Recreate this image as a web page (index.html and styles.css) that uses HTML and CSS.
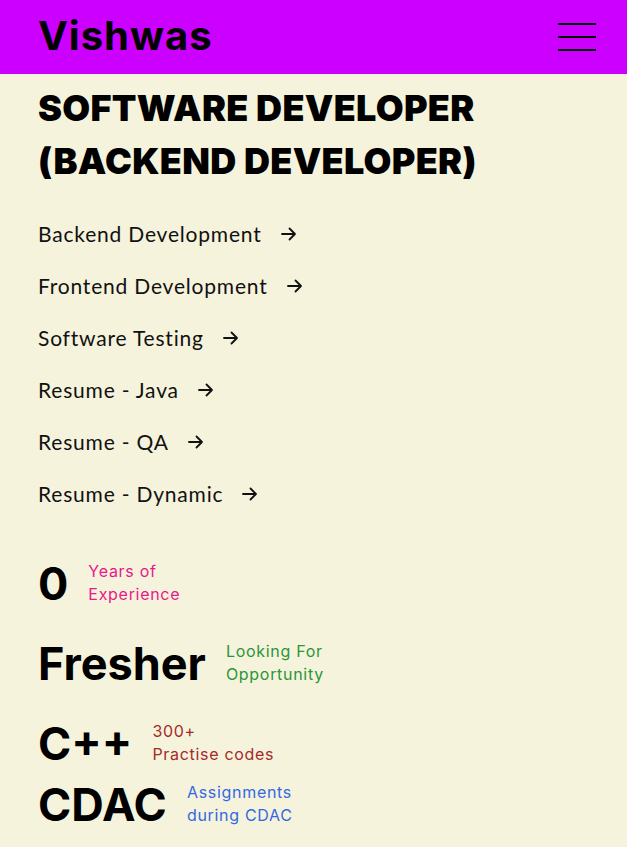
FILE: index.html
```html
<!DOCTYPE html>
<html lang="en">
<head>
<meta charset="utf-8">
<title>Vishwas</title>
<link rel="stylesheet" href="styles.css">
</head>
<body>
<header class="topbar">
  <div class="brand">Vishwas</div>
  <button class="menu" aria-label="Menu"><span></span><span></span><span></span></button>
</header>
<main class="content">
  <h1 class="title">SOFTWARE DEVELOPER (BACKEND DEVELOPER)</h1>
  <ul class="links">
    <li><a href="#">Backend Development<svg class="arrow" viewBox="0 0 16 14"><path d="M1 7h13M8.5 1.5 14 7l-5.5 5.5"/></svg></a></li>
    <li><a href="#">Frontend Development<svg class="arrow" viewBox="0 0 16 14"><path d="M1 7h13M8.5 1.5 14 7l-5.5 5.5"/></svg></a></li>
    <li><a href="#">Software Testing<svg class="arrow" viewBox="0 0 16 14"><path d="M1 7h13M8.5 1.5 14 7l-5.5 5.5"/></svg></a></li>
    <li><a href="#">Resume - Java<svg class="arrow" viewBox="0 0 16 14"><path d="M1 7h13M8.5 1.5 14 7l-5.5 5.5"/></svg></a></li>
    <li><a href="#">Resume - QA<svg class="arrow" viewBox="0 0 16 14"><path d="M1 7h13M8.5 1.5 14 7l-5.5 5.5"/></svg></a></li>
    <li><a href="#">Resume - Dynamic<svg class="arrow" viewBox="0 0 16 14"><path d="M1 7h13M8.5 1.5 14 7l-5.5 5.5"/></svg></a></li>
  </ul>
  <div class="stats">
    <div class="stat"><span class="big">0</span><span class="small pink">Years of<br>Experience</span></div>
    <div class="stat"><span class="big">Fresher</span><span class="small green">Looking For<br>Opportunity</span></div>
    <div class="stat"><span class="big">C++</span><span class="small brown">300+<br>Practise codes</span></div>
    <div class="stat tight"><span class="big">CDAC</span><span class="small blue">Assignments<br>during CDAC</span></div>
  </div>
</main>
</body>
</html>
```
FILE: styles.css
```css
* { box-sizing: border-box; }
html, body { margin: 0; padding: 0; }
body {
  background: #f5f3dc;
  color: #000;
  font-family: "Inter", "Liberation Sans", sans-serif;
}
.topbar {
  height: 74px;
  background: #cc00ff;
  display: flex;
  align-items: center;
  justify-content: space-between;
  padding: 0 31px 0 38px;
}
.brand {
  font-family: "Inter", sans-serif;
  font-weight: 700;
  font-size: 40px;
  letter-spacing: 1px;
  line-height: 1;
  margin-top: -2px;
}
.menu {
  width: 38px;
  height: 28px;
  padding: 0;
  border: 0;
  background: transparent;
  display: flex;
  flex-direction: column;
  justify-content: space-between;
  margin-top: -1px;
}
.menu span {
  display: block;
  height: 2px;
  width: 100%;
  background: #000;
}
.content { padding: 0 38px 40px; }
.title {
  margin: 8px 0 0;
  font-family: "Inter", sans-serif;
  font-weight: 900;
  font-size: 36px;
  line-height: 53px;
  letter-spacing: 0.3px;
  max-width: 460px;
}
.links {
  list-style: none;
  margin: 19px 0 0;
  padding: 0;
}
.links li { height: 52px; display: flex; align-items: center; }
.links a {
  display: inline-flex;
  align-items: center;
  gap: 19px;
  color: #111;
  text-decoration: none;
  font-family: "Lato", sans-serif;
  font-size: 21px;
  letter-spacing: 0.8px;
}
.arrow {
  width: 16px;
  height: 14px;
  fill: none;
  stroke: #111;
  stroke-width: 1.8;
  stroke-linecap: round;
  stroke-linejoin: round;
  margin-top: 1px;
}
.stats { margin-top: 39px; }
.stat {
  display: flex;
  align-items: center;
  gap: 20px;
  height: 50px;
}
.stat + .stat { margin-top: 30px; }
.stat.tight { margin-top: 11px; }
.big {
  font-family: "Inter", sans-serif;
  font-weight: 700;
  font-size: 45px;
  line-height: 1;
}
.small {
  font-family: "Inter", sans-serif;
  font-size: 16px;
  line-height: 23px;
  letter-spacing: 0.7px;
}
.pink { color: #e8198b; }
.green { color: #2b9638; }
.brown { color: #a52a2a; }
.blue { color: #3368e4; }
```
